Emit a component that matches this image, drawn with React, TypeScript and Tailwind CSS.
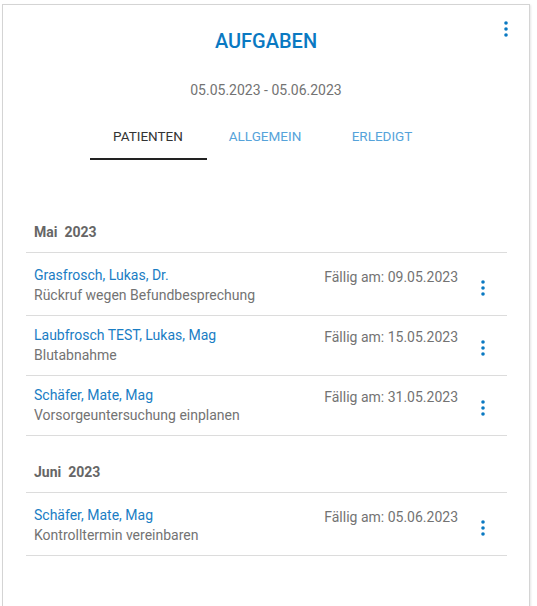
import React from "react";

type Task = {
  name: string;
  text: string;
  due: string;
};

type Group = {
  month: string;
  tasks: Task[];
};

const groups: Group[] = [
  {
    month: "Mai  2023",
    tasks: [
      {
        name: "Grasfrosch, Lukas, Dr.",
        text: "Rückruf wegen Befundbesprechung",
        due: "09.05.2023",
      },
      {
        name: "Laubfrosch TEST, Lukas, Mag",
        text: "Blutabnahme",
        due: "15.05.2023",
      },
      {
        name: "Schäfer, Mate, Mag",
        text: "Vorsorgeuntersuchung einplanen",
        due: "31.05.2023",
      },
    ],
  },
  {
    month: "Juni  2023",
    tasks: [
      {
        name: "Schäfer, Mate, Mag",
        text: "Kontrolltermin vereinbaren",
        due: "05.06.2023",
      },
    ],
  },
];

const tabs = ["PATIENTEN", "ALLGEMEIN", "ERLEDIGT"];

const MoreVert = () => (
  <svg viewBox="0 0 24 24" className="w-6 h-6 fill-[#0a79c2]">
    <circle cx="12" cy="6" r="1.8" />
    <circle cx="12" cy="12" r="1.8" />
    <circle cx="12" cy="18" r="1.8" />
  </svg>
);

const TaskRow = ({ task, first }: { task: Task; first: boolean }) => (
  <div
    className={`flex items-start border-b border-[#dcdcdc] pl-[8px] pb-[10px] ${
      first ? "pt-[12px]" : "pt-[9px]"
    }`}
  >
    <div className="flex-1 min-w-0 text-[14px] leading-5">
      <div className="text-[#1a7dc4]">{task.name}</div>
      <div className="text-[#737373]">{task.text}</div>
    </div>
    <div className="mt-[2px] mr-[1px] text-[14px] leading-5 text-[#737373] whitespace-nowrap">
      Fällig am: {task.due}
    </div>
    <button className="w-12 flex justify-center mt-[11px]" aria-label="Menü">
      <MoreVert />
    </button>
  </div>
);

export default function App() {
  return (
    <div
      className="h-[606px] overflow-hidden bg-white pt-[4px] pl-[2px]"
      style={{ fontFamily: "Roboto, 'Liberation Sans', sans-serif" }}
    >
      <div className="relative w-[528px] h-[640px] border border-[#d4d4d4] bg-white shadow-[1px_1px_2px_rgba(0,0,0,0.10)]">
        <button className="absolute top-[12px] right-[11px]" aria-label="Optionen">
          <MoreVert />
        </button>

        <h1 className="pt-[24px] text-center text-[20px] leading-6 font-medium text-[#0a79c2]">
          AUFGABEN
        </h1>

        <div className="mt-[27px] text-center text-[14px] leading-5 text-[#737373]">
          05.05.2023 - 05.06.2023
        </div>

        <div className="mt-[12px] flex justify-center pr-[2px]">
          {tabs.map((tab, i) => (
            <div
              key={tab}
              className={`relative w-[117px] h-12 flex items-center justify-center text-[13.5px] ${
                i === 0 ? "text-[#333333]" : "text-[#56a3da]"
              }`}
            >
              {tab}
              {i === 0 && (
                <span className="absolute left-0 right-0 bottom-0 h-[2px] bg-[#222222]" />
              )}
            </div>
          ))}
        </div>

        <div className="mt-[52px] ml-[23px] mr-[22px]">
          {groups.map((group, gi) => (
            <div key={group.month} className={gi > 0 ? "mt-[16px]" : ""}>
              <div className="pl-[8px] py-[10px] border-b border-[#dcdcdc] text-[14px] leading-5 font-bold text-[#666666] whitespace-pre">
                {group.month}
              </div>
              {group.tasks.map((task, ti) => (
                <TaskRow key={task.name + task.due} task={task} first={ti === 0} />
              ))}
            </div>
          ))}
        </div>
      </div>
    </div>
  );
}
